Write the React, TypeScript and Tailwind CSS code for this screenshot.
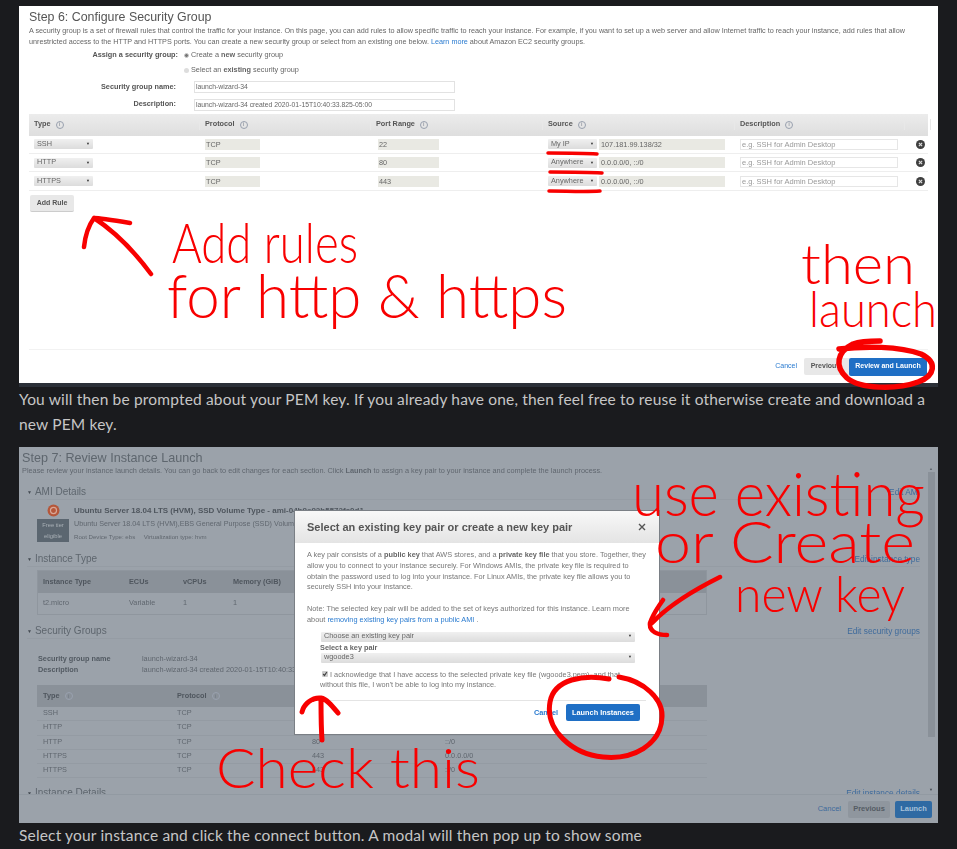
import React from 'react';

// small round "i" next to the table headings
const InfoDot = () => (
  <span className="inline-flex w-[8px] h-[8px] rounded-full border-[0.5px] border-gray-400 items-center justify-center text-[5px] leading-none font-normal text-gray-500 ml-[5px]">i</span>
);

const FakeSelect = ({ label, className }: { label: string; className: string }) => (
  <div className={`flex items-center justify-between rounded-[1px] px-[3px] bg-gradient-to-b from-[#f0f0f0] to-[#dcdcdc] text-[#666] ${className}`}>
    <span>{label}</span>
    <span className="text-[4px] text-[#333]">▼</span>
  </div>
);

const RedText = ({ x, y, w, size, children }: { x: number; y: number; w: number; size: number; children: string }) => (
  <text
    x={x}
    y={y}
    textLength={w}
    lengthAdjust="spacingAndGlyphs"
    fontSize={size}
    fontFamily="Lato, 'Open Sans', sans-serif"
    fontWeight={300}
    fill="#f80000"
    stroke="none"
  >
    {children}
  </text>
);

const rules = [
  { type: 'SSH', port: '22', source: 'My IP', cidr: '107.181.99.138/32' },
  { type: 'HTTP', port: '80', source: 'Anywhere', cidr: '0.0.0.0/0, ::/0' },
  { type: 'HTTPS', port: '443', source: 'Anywhere', cidr: '0.0.0.0/0, ::/0' },
];

const ruleCols = 'grid grid-cols-[171px_171px_172px_192px_170px_26px]';

const StepSix = () => (
  <div className="relative h-[381px] bg-[#2b3038] shrink-0">
    <div className="h-[377px] bg-white flex flex-col px-[10px] pt-[6px] text-[7px] text-[#666] blur-[0.3px]">
      <h2 className="text-[12.4px] leading-[11px] text-[#555]">Step 6: Configure Security Group</h2>
      <p className="mt-[3px] leading-[10.8px] text-[7.22px] whitespace-nowrap">
        A security group is a set of firewall rules that control the traffic for your instance. On this page, you can add rules to allow specific traffic to reach your instance. For example, if you want to set up a web server and allow Internet traffic to reach your instance, add rules that allow
        <br />
        unrestricted access to the HTTP and HTTPS ports. You can create a new security group or select from an existing one below. <span className="text-[#2a7bd0]">Learn more</span> about Amazon EC2 security groups.
      </p>

      <div className="flex flex-col text-[7.3px]">
        <div className="flex items-center h-[15px]">
          <span className="w-[149px] text-right font-bold text-[#555]">Assign a security group:</span>
          <span className="ml-[6px] w-[5px] h-[5px] rounded-full bg-[#777] border border-[#ccc]" />
          <span className="ml-[2px]">Create a <b>new</b> security group</span>
        </div>
        <div className="flex items-center h-[15px]">
          <span className="ml-[155px] w-[5px] h-[5px] rounded-full bg-[#ddd]" />
          <span className="ml-[2px]">Select an <b>existing</b> security group</span>
        </div>
        <div className="flex items-center h-[19px]">
          <span className="w-[147px] text-right font-bold text-[#555]">Security group name:</span>
          <div className="ml-[18px] w-[261px] h-[12px] border border-[#e2e2e2] px-[1px] leading-[10px] text-[6.8px]">launch-wizard-34</div>
        </div>
        <div className="flex items-center h-[16px]">
          <span className="w-[147px] text-right font-bold text-[#555]">Description:</span>
          <div className="ml-[18px] w-[261px] h-[12px] border border-[#e2e2e2] px-[1px] leading-[10px] text-[6.8px]">launch-wizard-34 created 2020-01-15T10:40:33.825-05:00</div>
        </div>
      </div>

      <div className={`${ruleCols} h-[22px] mt-[1px] items-center bg-gradient-to-b from-[#ececec] to-[#dedede] text-[7.3px] font-bold text-[#555]`}>
        {['Type', 'Protocol', 'Port Range', 'Source', 'Description', ''].map((col) => (
          <div key={col} className="flex items-center h-[11px] pl-[5px] border-r border-[#e8e8e8]">
            {col}
            {col && <InfoDot />}
          </div>
        ))}
      </div>

      {rules.map((rule) => (
        <div key={rule.type} className={`${ruleCols} h-[18.4px] items-center border-b border-[#eee] text-[7.3px]`}>
          <div className="pl-[5px]"><FakeSelect label={rule.type} className="w-[59px] h-[10px]" /></div>
          <div className="pl-[5px]"><div className="w-[55px] h-[11px] px-[1px] leading-[11px] bg-[#e9e9e3]">TCP</div></div>
          <div className="pl-[7px]"><div className="w-[61px] h-[11px] px-[1px] leading-[11px] bg-[#e9e9e3]">{rule.port}</div></div>
          <div className="flex items-center pl-[5px] gap-[2px]">
            <FakeSelect label={rule.source} className="w-[49px] h-[10px]" />
            <div className="w-[126px] h-[11px] px-[2px] leading-[11px] bg-[#e9e9e3]">{rule.cidr}</div>
          </div>
          <div className="pl-[5px]"><div className="w-[158px] h-[11px] px-[1px] leading-[9px] border border-[#e6e6e6] text-[#999] text-[7.5px]">e.g. SSH for Admin Desktop</div></div>
          <div className="pl-[11px]">
            <svg width="9" height="9" viewBox="0 0 10 10">
              <circle cx="5" cy="5" r="5" fill="#3f3f3f" />
              <path d="M3.2 3.2l3.6 3.6M6.8 3.2l-3.6 3.6" stroke="#ddd" strokeWidth="1.3" />
            </svg>
          </div>
        </div>
      ))}

      <button className="self-start ml-[1px] mt-[4px] w-[44px] h-[17px] rounded-[2px] bg-[#e8e8e8] border-b border-[#ccc] text-[7px] font-bold text-[#555]">Add Rule</button>

      <div className="mt-auto border-t border-[#f2f2f2] h-[34px] flex items-center justify-end pr-[1px] text-[7px]">
        <span className="text-[#2a7bd0] mr-[7px]">Cancel</span>
        <button className="w-[47px] h-[17px] rounded-[2px] bg-[#e8e8e8] font-bold text-[#555] mr-[-2px] pr-[4px]">Previous</button>
        <button className="w-[78px] h-[18px] rounded-[2px] bg-[#1f6fc5] font-bold text-white">Review and Launch</button>
      </div>
    </div>

    {/* red pen notes on top of the shot */}
    <svg className="absolute left-0 top-0 overflow-visible pointer-events-none" width="919" height="381" viewBox="0 0 919 381" fill="none" stroke="#f80000" strokeLinecap="round" strokeLinejoin="round">
      <path d="M529 147c15 0 35 0 49 1" strokeWidth="3.5" />
      <path d="M531 166c17 0 36 0 52 1" strokeWidth="3.5" />
      <path d="M530 185c17 0 36 1 51 0" strokeWidth="3.5" />
      <path d="M132 268C115 245 95 225 75 212M65 241c1-10 5-22 10-29c6 0 24 3 36 5" strokeWidth="4.5" />
      <path d="M820 343c25-3 60-3 82 5c17 8 14 22-3 28c-22 8-58 7-71-4c-13-12-10-26 6-34c8-3 20-3 27-3" strokeWidth="5.5" />
      <RedText x={153} y={257} w={186} size={56}>Add rules</RedText>
      <RedText x={148} y={312} w={400} size={62}>for http &amp; https</RedText>
      <RedText x={782} y={278} w={114} size={56}>then</RedText>
      <RedText x={790} y={321} w={128} size={50}>launch</RedText>
    </svg>
  </div>
);

const Section = ({ title, edit }: { title: string; edit: string }) => (
  <div className="flex items-start justify-between h-[14px] border-b border-[#959ca4] text-[10px] leading-[12px] text-[#5e666e]">
    <span className="flex items-center">
      <span className="text-[5px] mr-[3px] text-[#444b52]">▼</span>
      {title}
    </span>
    <span className="text-[8.3px] text-[#3f6b9c]">{edit}</span>
  </div>
);

const sgRows = [
  ['SSH', 'TCP', '', ''],
  ['HTTP', 'TCP', '', ''],
  ['HTTP', 'TCP', '80', '::/0'],
  ['HTTPS', 'TCP', '443', '0.0.0.0/0'],
  ['HTTPS', 'TCP', '443', '::/0'],
];

const StepSeven = () => (
  <div className="relative h-[376px] shrink-0 bg-[#9ba2aa]">
    <div className="h-full flex flex-col overflow-hidden text-[#60676f] text-[7px] blur-[0.3px]">
      <div className="relative flex-1 overflow-hidden pl-[3px]">
        <h2 className="mt-[5px] text-[12.6px] leading-[12px] text-[#5e666e]">Step 7: Review Instance Launch</h2>
        <p className="mt-[2px] leading-[10px] text-[7.33px] whitespace-nowrap">Please review your instance launch details. You can go back to edit changes for each section. Click <b>Launch</b> to assign a key pair to your instance and complete the launch process.</p>

        <div className="mt-[10px] mr-[18px] pl-[5px]">
          <Section title="AMI Details" edit="Edit AMI" />
          <div className="flex mt-[4px] pl-[10px]">
            <div className="flex flex-col items-center w-[32px]">
              <svg width="13" height="13" viewBox="0 0 12 12">
                <circle cx="6" cy="6" r="5.5" fill="#b5573a" />
                <circle cx="6" cy="6" r="2.8" fill="none" stroke="#d9a696" strokeWidth="1.1" />
              </svg>
              <div className="mt-[2px] w-[32px] h-[23px] bg-[#5b6670] text-[#a9b0b6] text-[5.8px] text-center leading-[11px] pt-[1px]">Free tier<br />eligible</div>
            </div>
            <div className="ml-[5px] leading-[13px] whitespace-nowrap">
              <div className="text-[8px] font-bold text-[#4f565e]">Ubuntu Server 18.04 LTS (HVM), SSD Volume Type - ami-04b9e92b5572fa0d1</div>
              <div className="text-[7.2px]">Ubuntu Server 18.04 LTS (HVM),EBS General Purpose (SSD) Volume Type.</div>
              <div className="text-[6.1px]">Root Device Type: ebs &nbsp;&nbsp;&nbsp; Virtualization type: hvm</div>
            </div>
          </div>

          <div className="mt-[10px]"><Section title="Instance Type" edit="Edit instance type" /></div>
          <div className="mt-[3px] ml-[10px] w-[670px] border border-[#8f969e]">
            <div className="grid grid-cols-[86px_54px_50px_1fr] h-[22px] items-center pl-[5px] bg-[#8a9199] font-bold text-[7.3px] text-[#4f565e]">
              <span>Instance Type</span><span>ECUs</span><span>vCPUs</span><span>Memory (GiB)</span>
            </div>
            <div className="grid grid-cols-[86px_54px_50px_1fr] h-[21px] items-center pl-[5px] text-[7.3px]">
              <span>t2.micro</span><span>Variable</span><span>1</span><span>1</span>
            </div>
          </div>

          <div className="mt-[10px]"><Section title="Security Groups" edit="Edit security groups" /></div>
          <div className="mt-[14px] ml-[11px] leading-[11px] text-[7.3px]">
            <div className="flex"><b className="w-[104px] text-[#525a62]">Security group name</b>launch-wizard-34</div>
            <div className="flex"><b className="w-[104px] text-[#525a62]">Description</b>launch-wizard-34 created 2020-01-15T10:40:33.825-05:00</div>
          </div>
          <div className="mt-[10px] ml-[10px] w-[670px]">
            <div className="grid grid-cols-[134px_135px_133px_1fr] h-[22px] items-center pl-[6px] bg-[#8a9199] font-bold text-[7.3px] text-[#4f565e]">
              <span className="flex items-center">Type<InfoDot /></span>
              <span className="flex items-center">Protocol<InfoDot /></span>
            </div>
            {sgRows.map((row, i) => (
              <div key={i} className="grid grid-cols-[134px_135px_133px_1fr] h-[14.3px] items-center pl-[6px] border-b border-[#949ba3] text-[7.3px]">
                {row.map((cell, j) => <span key={j}>{cell}</span>)}
              </div>
            ))}
          </div>
          <div className="mt-[9px]">
            <Section title="Instance Details" edit="Edit instance details" />
          </div>
        </div>

        {/* scrollbar */}
        <div className="absolute right-[3px] top-[19px] w-[8px] h-[272px] flex flex-col items-center">
          <span className="text-[4px] text-[#60676f]">▲</span>
          <div className="w-[7px] h-[265px] bg-[#8a9199]" />
        </div>
        <span className="absolute right-[5px] bottom-[1px] text-[4px] text-[#444b52]">▼</span>
      </div>

      <div className="h-[29px] shrink-0 border-t border-[#929aa2] bg-[#9ba2aa] flex items-center justify-end pr-[6px] text-[7.5px]">
        <span className="text-[#3f6b9c] mr-[7px]">Cancel</span>
        <button className="w-[42px] h-[17px] rounded-[2px] bg-[#8f969e] font-bold text-[#555c64] mr-[5px]">Previous</button>
        <button className="w-[37px] h-[17px] rounded-[2px] bg-[#2f6aa3] font-bold text-[#a9c2da]">Launch</button>
      </div>
    </div>

    {/* key pair dialog */}
    <div className="absolute left-[275px] top-[63px] w-[366px] h-[225px] bg-white border border-[#7a7f85] flex flex-col text-[#777] text-[7.34px] blur-[0.3px]">
      <div className="h-[32px] shrink-0 flex items-center justify-between pl-[12px] pr-[13px] bg-gradient-to-b from-[#f8f8f8] to-[#e4e4e4]">
        <span className="text-[11px] font-bold text-[#555]">Select an existing key pair or create a new key pair</span>
        <svg width="8" height="8" viewBox="0 0 8 8"><path d="M1 1l6 6M7 1l-6 6" stroke="#555" strokeWidth="1.4" /></svg>
      </div>
      <div className="flex flex-col pl-[12px] pr-[12px] pt-[7px] leading-[10.8px] whitespace-nowrap">
        <p>
          A key pair consists of a <b className="text-[#666]">public key</b> that AWS stores, and a <b className="text-[#666]">private key file</b> that you store. Together, they
          <br />allow you to connect to your instance securely. For Windows AMIs, the private key file is required to
          <br />obtain the password used to log into your instance. For Linux AMIs, the private key file allows you to
          <br />securely SSH into your instance.
        </p>
        <p className="mt-[10.8px]">
          Note: The selected key pair will be added to the set of keys authorized for this instance. Learn more
          <br />about <span className="text-[#2a7bd0]">removing existing key pairs from a public AMI</span> .
        </p>
        <FakeSelect label="Choose an existing key pair" className="ml-[14px] mt-[6px] w-[314px] h-[10px]" />
        <b className="ml-[13px] text-[#666] leading-[11px]">Select a key pair</b>
        <FakeSelect label="wgoode3" className="ml-[14px] w-[314px] h-[10px]" />
        <div className="ml-[13px] mt-[7px]">
          <svg className="inline-block mx-[2px] align-[-0.5px]" width="6" height="6" viewBox="0 0 6 6">
            <rect width="6" height="6" rx="1" fill="#ccc" />
            <path d="M1.2 3l1.3 1.5L4.8 1" fill="none" stroke="#444" strokeWidth="1.2" />
          </svg>
          I acknowledge that I have access to the selected private key file (wgoode3.pem), and that
          <br />without this file, I won't be able to log into my instance.
        </div>
      </div>
      <div className="mx-[13px] mt-[9px] border-t border-[#e4e4e4] flex items-center justify-end h-[24px] pr-[6px]">
        <span className="text-[#2a7bd0] font-bold mr-[8px]">Cancel</span>
        <button className="w-[74px] h-[17px] rounded-[2px] bg-[#1f6fc5] font-bold text-white">Launch Instances</button>
      </div>
    </div>

    <svg className="absolute left-0 top-0 overflow-visible pointer-events-none" width="919" height="376" viewBox="0 0 919 376" fill="none" stroke="#f80000" strokeLinecap="round" strokeLinejoin="round">
      <path d="M303 293c-1-14-1-28-1-42M283 265c2-8 10-15 19-14c6 1 12 9 17 15" strokeWidth="5" />
      <path d="M701 130C675 143 650 158 633 176M644 153c-5 7-10 14-13 23c-1 9 8 12 17 12" strokeWidth="4.5" />
      <path d="M590 232c-25-5-55 0-59 23c-5 28 22 52 53 55c30 3 58-12 59-40c1-18-18-36-43-40" strokeWidth="5" />
      <RedText x={613} y={69} w={293} size={62}>use existing</RedText>
      <RedText x={636} y={116} w={260} size={58}>or Create</RedText>
      <RedText x={716} y={165} w={170} size={50}>new key</RedText>
      <RedText x={197} y={341} w={264} size={56}>Check this</RedText>
    </svg>
  </div>
);

const App: React.FC = () => {
  return (
    <div className="w-[957px] h-[849px] overflow-hidden bg-[#1a1b1e] px-[19px] pt-[6px] flex flex-col font-['Liberation_Sans',Arial,sans-serif]">
      <StepSix />
      <p className="h-[60px] shrink-0 font-['Lato',sans-serif] text-[15.5px] leading-[25px] tracking-[0.17px] text-[#c6c6c6] whitespace-nowrap">
        You will then be prompted about your PEM key. If you already have one, then feel free to reuse it otherwise create and download a
        <br />new PEM key.
      </p>
      <StepSeven />
      <p className="font-['Lato',sans-serif] text-[15.5px] leading-[25px] tracking-[0.17px] text-[#c6c6c6] whitespace-nowrap">
        Select your instance and click the connect button. A modal will then pop up to show some
      </p>
    </div>
  );
};

export default App;
